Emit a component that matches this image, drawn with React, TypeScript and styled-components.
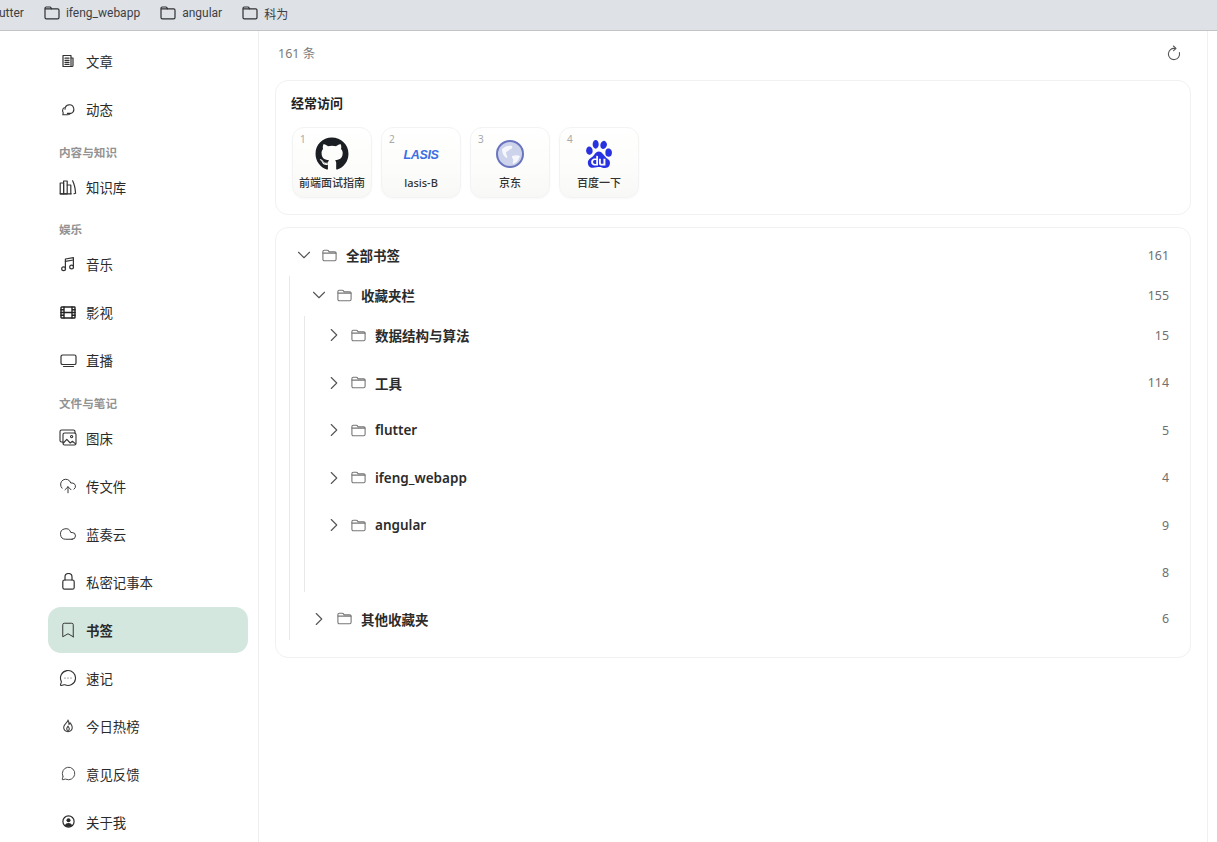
import React from "react";
import styled, { createGlobalStyle } from "styled-components";
import { CloudUpload, Cloud, Bookmark, MessageCircleMore, MessageCircle, ChevronDown, ChevronRight } from "lucide-react";
import { FaGithub } from "react-icons/fa";
import { SiBaidu } from "react-icons/si";

const FONT = `"Noto Sans", "Noto Sans CJK SC", sans-serif`;

const Global = createGlobalStyle`
  html, body { margin: 0; padding: 0; background: #fff; height: 100%; overflow: hidden; }
  body { font-family: ${FONT}; color: #222; }
  * { box-sizing: border-box; }
`;

const Page = styled.div`
  width: 1217px; height: 842px; display: flex; flex-direction: column; overflow: hidden; background: #fff;
`;
const BookmarkBar = styled.div`
  height: 31px; flex: none; display: flex; align-items: center; gap: 20px;
  background: #dee1e6; border-bottom: 1px solid #c2c4c8; padding-bottom: 4px;
`;
const BarItem = styled.div`
  display: flex; align-items: center; gap: 6px; font-family: Roboto, "Noto Sans CJK SC", sans-serif;
  font-size: 12px; color: #3c3f44; white-space: nowrap;
  &:first-child { margin-left: -1px; }
`;
const Body = styled.div`flex: 1; display: flex; min-height: 0;`;
const Sidebar = styled.nav`
  width: 259px; flex: none; border-right: 1px solid #eeeeee; padding: 7px 10px 0 48px;
  display: flex; flex-direction: column; gap: 2px; overflow: hidden;
`;
const NavItem = styled.div<{ $active?: boolean }>`
  height: 46px; flex: none; display: flex; align-items: center; padding-left: 11px; border-radius: 13px;
  font-size: 13.4px; color: #2a2a2a; background: ${p => (p.$active ? "#d3e7df" : "transparent")};
  font-weight: ${p => (p.$active ? 600 : 400)};
`;
const NavIcon = styled.span`
  width: 18px; height: 18px; margin-right: 9px; display: flex; align-items: center; justify-content: center; color: #333; flex: none;
`;
const SectionTitle = styled.div`
  height: 27.5px; flex: none; display: flex; align-items: flex-end; padding: 0 0 1px 11px;
  font-size: 11.6px; line-height: 16px; font-weight: 600; color: #929292;
`;
const Main = styled.main`
  width: 949px; flex: none; border-right: 1px solid #f0f0f0; padding: 0 16px; display: flex; flex-direction: column;
`;
const Header = styled.div`
  height: 43px; margin-bottom: 6px; flex: none; display: flex; align-items: center; justify-content: space-between;
  padding: 0 10px 0 3px; font-size: 12.5px; color: #7b7b7b;
`;
const Card = styled.section`
  width: 916px; border: 1px solid #f1f1f1; border-radius: 13px; background: #fff; flex: none;
`;
const FrequentCard = styled(Card)`
  height: 135px; padding: 12px 15px 0; margin-bottom: 12px;
`;
const CardTitle = styled.h2`
  margin: 0 0 14px; font-size: 13px; line-height: 20px; font-weight: 600; color: #222;
`;
const Tiles = styled.div`display: flex; gap: 9px; padding-left: 1px;`;
const Tile = styled.div`
  position: relative; width: 80px; height: 71px; border-radius: 12px; border: 1px solid #f3f3f3;
  background: linear-gradient(180deg, #ffffff 0%, #fcfcfa 60%, #f8f9f7 100%);
  box-shadow: 0 1px 2px rgba(0,0,0,0.03);
  display: flex; flex-direction: column; align-items: center;
`;
const TileRank = styled.span`
  position: absolute; left: 7px; top: 5px; font-size: 10px; line-height: 12px; color: #a8a8a8;
`;
const TileLogo = styled.div`
  height: 45px; width: 100%; flex: none; display: flex; align-items: center; justify-content: center; padding-top: 7px;
`;
const TileLabel = styled.div`
  font-size: 11px; line-height: 16px; color: #333; margin-top: 2px; white-space: nowrap; font-weight: 500;
`;
const LasisMark = styled.span`
  font-family: "Liberation Sans", sans-serif; font-size: 12.5px; font-weight: 700; font-style: italic;
  letter-spacing: -0.4px; color: #3b6fe3; margin-top: 1px;
`;
const TreeCard = styled(Card)`height: 431px; padding-top: 8px;`;
const Tree = styled.div`margin-left: -1px;`;
const Row = styled.div`
  height: 38px; display: flex; align-items: center; padding: 0 21px; font-size: 13.5px; font-weight: 600; color: #2b2b2b;
`;
const Chevron = styled.span<{ $tight?: boolean }>`
  width: 16px; height: 16px; display: flex; align-items: center; justify-content: center; color: #555; flex: none;
  margin-right: ${p => (p.$tight ? 8 : 9)}px;
`;
const FolderSlot = styled.span`
  width: 16px; height: 16px; display: flex; align-items: center; justify-content: center; flex: none; margin-right: 9px;
`;
const RowName = styled.span`flex: 1; white-space: nowrap;`;
const RowCount = styled.span`font-size: 12.4px; font-weight: 400; color: #6f6f6f;`;
const Nested = styled.div<{ $gap?: number; $top: number; $bottom?: number }>`
  margin: ${p => p.$top}px 0 ${p => p.$bottom ?? 0}px 14px; border-left: 1px solid #e9e9e9;
  display: flex; flex-direction: column; gap: ${p => p.$gap ?? 0}px;
`;
const Spacer = styled.div<{ $h: number }>`height: ${p => p.$h}px;`;

const Svg = ({ w, h, children, stroke = "#333", sw = 1.2 }: any) => (
  <svg width={w} height={h} viewBox={`0 0 ${w} ${h}`} fill="none" stroke={stroke} strokeWidth={sw} strokeLinecap="round" strokeLinejoin="round">{children}</svg>
);

const BarFolder = () => (
  <Svg w={16} h={14} stroke="#2f3033" sw={1.2}>
    <path d="M2.4 1h3.4c.7 0 1 .3 1.3 1l.3.8h6.2c.9 0 1.4.5 1.4 1.4v7.2c0 .9-.5 1.4-1.4 1.4H2.4c-.9 0-1.4-.5-1.4-1.4V2.4C1 1.5 1.5 1 2.4 1z" />
    <path d="M7.4 2.8H1.4" />
  </Svg>
);
const TreeFolder = () => (
  <Svg w={15} h={13} stroke="#777" sw={1.1}>
    <path d="M2.3 1.2h3c.6 0 .9.2 1.2.7l.6 1h5.6c.9 0 1.4.5 1.4 1.4v6c0 .9-.5 1.4-1.4 1.4H2.3c-.9 0-1.4-.5-1.4-1.4V2.6c0-.9.5-1.4 1.4-1.4z" />
    <path d="M1 4.1h13" />
  </Svg>
);
const RefreshIcon = () => (
  <Svg w={14} h={16} stroke="#555" sw={1.1}>
    <path d="M12.4 7.6A5.6 5.6 0 1 1 8 3.5" />
    <path d="M6.4 1l2.6 2.4-2.4 2.2" />
  </Svg>
);

const ArticleIcon = () => (
  <Svg w={14} h={14}>
    <path d="M2 1.5h8v11H2z" />
    <path d="M10 4h2v7.5c0 .6-.4 1-1 1h-1" />
    <path d="M4 4.2h4M4 6.4h4M4 8.4h4M4 10.4h4" />
  </Svg>
);
const MomentIcon = () => (
  <Svg w={14} h={14} sw={1.1}>
    <path d="M4 7.2a4.4 4.4 0 1 1 5.8 4.2H6.4" />
    <path d="M3.2 5.6A3.4 3.4 0 0 0 1.6 8.6c0 1 .3 1.7.6 2.2l-.4 2h4.6c1.2 0 2-.4 2.6-1" />
  </Svg>
);
const LibraryIcon = () => (
  <Svg w={18} h={16} sw={1.2}>
    <path d="M1.2 4h3.4v10.8H1.2z" />
    <path d="M4.6 2h3.6v12.8H4.6z" />
    <path d="M1.2 14.8h11" />
    <path d="M8.2 6h3.6v8.8" />
    <path d="M13.6 1.8c1.6 3 2.6 7 3 12.4l-1.6.5" />
  </Svg>
);
const MusicIcon = () => (
  <Svg w={16} h={16}>
    <path d="M5.4 12.6V3l8-1.4v9.2" />
    <path d="M5.4 5.4l8-1.4" />
    <circle cx="3.6" cy="12.8" r="1.9" />
    <circle cx="11.6" cy="11" r="1.9" />
  </Svg>
);
const FilmIcon = () => (
  <Svg w={16} h={13} sw={1.4} stroke="#222">
    <rect x="1" y="1" width="14" height="11" rx=".6" />
    <path d="M4 1v11M12 1v11M4 6.5h8M1 3.8h3M1 6.5h3M1 9.2h3M12 3.8h3M12 6.5h3M12 9.2h3" />
  </Svg>
);
const ScreenIcon = () => (
  <Svg w={17} h={13} sw={1.2}>
    <rect x="1" y="1" width="15" height="9.5" rx="1.6" />
    <path d="M3.5 12.5h10" />
  </Svg>
);
const ImagesIcon = () => (
  <Svg w={18} h={17} sw={1.1}>
    <path d="M4 13H2.6C1.7 13 1 12.3 1 11.4V2.6C1 1.7 1.7 1 2.6 1h11.8c.9 0 1.6.7 1.6 1.6V4" />
    <rect x="4" y="4" width="13" height="12" rx="1.6" />
    <path d="M4.4 14l3.4-3.6 3.4 3.6 2.2-1.7 3.2 2.6" />
    <circle cx="12.6" cy="7.6" r="1.1" />
  </Svg>
);
const LockIcon = () => (
  <Svg w={13} h={17} sw={1.2}>
    <rect x=".8" y="7" width="11.4" height="9.2" rx="1.8" />
    <path d="M3 7V4a3.5 3.5 0 0 1 7 0v3" />
  </Svg>
);
const FlameIcon = () => (
  <Svg w={12} h={14} sw={1.1} stroke="#444">
    <path d="M6 1c.3 2-3.8 3.8-4.3 7-.3 2.6 1.8 4.6 4.3 4.6s4.6-2 4.2-4.6C9.9 6 8.8 5 8.2 3.8 7.8 4.8 7.4 5.2 6.9 5.4 7 3.8 6.8 2.2 6 1z" />
    <path d="M6 7c-.2 1-1.4 1.6-1.3 3 .1.8.6 1.4 1.3 1.4s1.3-.6 1.3-1.4C7.3 8.6 6.3 8.2 6 7z" />
  </Svg>
);
const UserCircleIcon = () => (
  <svg width="13" height="13" viewBox="0 0 13 13">
    <circle cx="6.5" cy="6.5" r="5.6" fill="none" stroke="#2a2a2a" strokeWidth="1.2" />
    <circle cx="6.5" cy="5.2" r="2" fill="#2a2a2a" />
    <path d="M2.9 10.4c.6-1.7 2-2.4 3.6-2.4s3 .7 3.6 2.4c-1 .9-2.2 1.4-3.6 1.4s-2.6-.5-3.6-1.4z" fill="#2a2a2a" />
  </svg>
);
const GlobeLogo = () => (
  <svg width="30" height="30" viewBox="0 0 30 30" style={{ filter: "blur(0.6px)" }}>
    <circle cx="15" cy="15" r="13" fill="#cdd3ea" stroke="#6a75c0" strokeWidth="2" />
    <path d="M7 10c3-3 7-4 10-3 1 2-1 3-3 4-1 2-3 1-3 3 0 2 2 3 1 5-3-1-5-5-5-9z" fill="#f6f7fc" />
    <path d="M17 17c3-1 6-1 8 0-1 4-4 7-7 8-1-2 1-3 0-5-1-1-1-2-1-3z" fill="#f6f7fc" />
  </svg>
);

type Item = { label: string; icon: React.ReactNode; active?: boolean } | { section: string };
const nav: Item[] = [
  { label: "文章", icon: <ArticleIcon /> },
  { label: "动态", icon: <MomentIcon /> },
  { section: "内容与知识" },
  { label: "知识库", icon: <LibraryIcon /> },
  { section: "娱乐" },
  { label: "音乐", icon: <MusicIcon /> },
  { label: "影视", icon: <FilmIcon /> },
  { label: "直播", icon: <ScreenIcon /> },
  { section: "文件与笔记" },
  { label: "图床", icon: <ImagesIcon /> },
  { label: "传文件", icon: <CloudUpload size={18} strokeWidth={1.3} /> },
  { label: "蓝奏云", icon: <Cloud size={18} strokeWidth={1.3} /> },
  { label: "私密记事本", icon: <LockIcon /> },
  { label: "书签", icon: <Bookmark size={20} strokeWidth={1.3} />, active: true },
  { label: "速记", icon: <MessageCircleMore size={18} strokeWidth={1.5} /> },
  { label: "今日热榜", icon: <FlameIcon /> },
  { label: "意见反馈", icon: <MessageCircle size={15} strokeWidth={1.4} /> },
  { label: "关于我", icon: <UserCircleIcon /> },
];

const tiles = [
  { n: 1, label: "前端面试指南", logo: <FaGithub size={34} color="#1b1f23" /> },
  { n: 2, label: "lasis-B", logo: <LasisMark>LASIS</LasisMark> },
  { n: 3, label: "京东", logo: <GlobeLogo /> },
  { n: 4, label: "百度一下", logo: <SiBaidu size={28} color="#2932e1" /> },
];

const TreeRow = ({ name, count, open, empty, tight }: { name?: string; count: number; open?: boolean; empty?: boolean; tight?: boolean }) => (
  <Row>
    {!empty && (
      <Chevron $tight={tight}>
        {open ? <ChevronDown size={22} strokeWidth={1.2} style={{ flex: "none" }} /> : <ChevronRight size={22} strokeWidth={1.2} style={{ flex: "none" }} />}
      </Chevron>
    )}
    {!empty && <FolderSlot><TreeFolder /></FolderSlot>}
    <RowName>{name}</RowName>
    <RowCount>{count}</RowCount>
  </Row>
);

export default function App() {
  return (
    <Page>
      <Global />
      <BookmarkBar>
        <BarItem>utter</BarItem>
        <BarItem><BarFolder />ifeng_webapp</BarItem>
        <BarItem><BarFolder />angular</BarItem>
        <BarItem><BarFolder />科为</BarItem>
      </BookmarkBar>
      <Body>
        <Sidebar>
          {nav.map((it, i) =>
            "section" in it ? (
              <SectionTitle key={i}>{it.section}</SectionTitle>
            ) : (
              <NavItem key={i} $active={it.active}>
                <NavIcon>{it.icon}</NavIcon>
                {it.label}
              </NavItem>
            )
          )}
        </Sidebar>
        <Main>
          <Header>
            <span>161 条</span>
            <RefreshIcon />
          </Header>
          <FrequentCard>
            <CardTitle>经常访问</CardTitle>
            <Tiles>
              {tiles.map(t => (
                <Tile key={t.n}>
                  <TileRank>{t.n}</TileRank>
                  <TileLogo>{t.logo}</TileLogo>
                  <TileLabel>{t.label}</TileLabel>
                </Tile>
              ))}
            </Tiles>
          </FrequentCard>
          <TreeCard>
            <Tree>
              <TreeRow name="全部书签" count={161} open />
              <Nested $top={2}>
                <TreeRow name="收藏夹栏" count={155} open />
                <Nested $top={2} $gap={9.6} $bottom={8}>
                  <TreeRow tight name="数据结构与算法" count={15} />
                  <TreeRow tight name="工具" count={114} />
                  <TreeRow tight name="flutter" count={5} />
                  <TreeRow tight name="ifeng_webapp" count={4} />
                  <TreeRow tight name="angular" count={9} />
                  <TreeRow empty count={8} />
                </Nested>
                <TreeRow name="其他收藏夹" count={6} />
                <Spacer $h={2} />
              </Nested>
            </Tree>
          </TreeCard>
        </Main>
      </Body>
    </Page>
  );
}
